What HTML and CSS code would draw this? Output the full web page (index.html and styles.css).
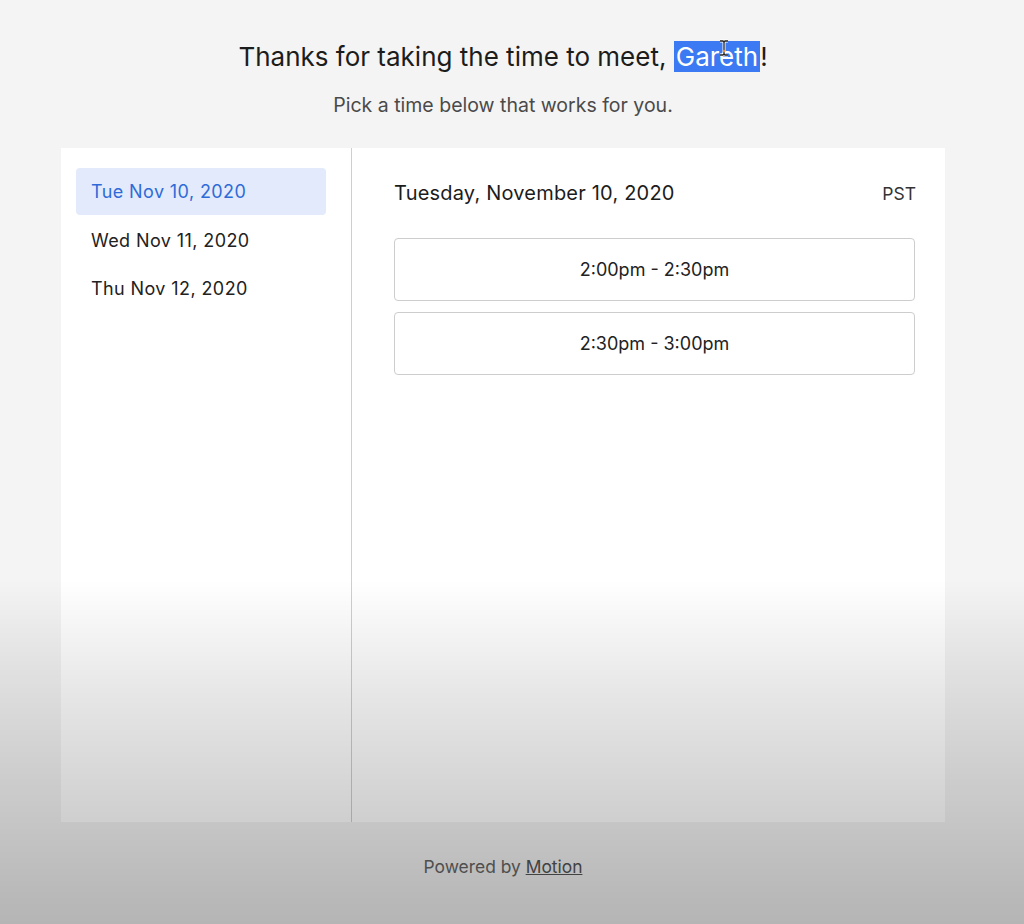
FILE: index.html
```html
<!DOCTYPE html>
<html lang="en">
<head>
  <meta charset="UTF-8">
  <title>Pick a time</title>
  <link rel="stylesheet" href="styles.css">
</head>
<body>
  <div class="page">
    <h1 class="title">Thanks for taking the time to meet, <span class="sel">Gareth<svg class="cursor" width="12" height="20" viewBox="0 0 12 20"><path d="M2 2h3l1 1.2 1-1.2h3M6 3v12M2 16h3l1-1.2 1 1.2h3" fill="none" stroke="#fff" stroke-width="3"/><path d="M2 2h3l1 1.2 1-1.2h3M6 3v12M2 16h3l1-1.2 1 1.2h3" fill="none" stroke="#222" stroke-width="1.3"/><circle cx="6" cy="12" r="1.3" fill="#e8903a"/></svg></span>!</h1>
    <p class="subtitle">Pick a time below that works for you.</p>

    <div class="card">
      <div class="days">
        <div class="day active">Tue Nov 10, 2020</div>
        <div class="day">Wed Nov 11, 2020</div>
        <div class="day">Thu Nov 12, 2020</div>
      </div>
      <div class="slots">
        <div class="slots-head">
          <span class="slots-date">Tuesday, November 10, 2020</span>
          <span class="tz">PST</span>
        </div>
        <button class="slot">2:00pm - 2:30pm</button>
        <button class="slot">2:30pm - 3:00pm</button>
      </div>
    </div>

    <p class="footer">Powered by <a href="#">Motion</a></p>
  </div>
  <div class="shade"></div>
</body>
</html>
```

FILE: styles.css
```css
body {
  margin: 0;
  background: #f4f4f4;
  font-family: Inter, "Noto Sans", sans-serif;
  color: #1c1c1c;
}

.page {
  width: 1006px;
  display: flex;
  flex-direction: column;
  align-items: center;
  padding-top: 39px;
}

.title {
  margin: 0;
  font-size: 26px;
  font-weight: 400;
  line-height: 36px;
}

.sel {
  position: relative;
  background: #3b7af2;
  color: #fff;
  padding: 0 2px;
}

.cursor {
  position: absolute;
  left: 44px;
  top: -2px;
}

.subtitle {
  margin: 17px 0 0;
  font-size: 19.5px;
  line-height: 26px;
  color: #4a4a4a;
}

.card {
  margin-top: 30px;
  width: 884px;
  height: 674px;
  background: #fff;
  display: flex;
}

.days {
  width: 291px;
  border-right: 1px solid #cfcfcf;
  padding: 20px 0 0 15px;
  box-sizing: border-box;
}

.day {
  width: 250px;
  height: 47px;
  line-height: 47px;
  margin-bottom: 1.5px;
  padding-left: 15px;
  box-sizing: border-box;
  font-size: 18px;
  letter-spacing: 0.4px;
  color: #222;
  border-radius: 4px;
}

.day.active {
  background: #e2eafb;
  color: #2f6bd8;
}

.slots {
  flex: 1;
  padding: 32px 29px 0 42px;
}

.slots-head {
  display: flex;
  justify-content: space-between;
  align-items: center;
  height: 26px;
  margin-bottom: 32px;
}

.slots-date {
  font-size: 20px;
  letter-spacing: 0.2px;
}

.tz {
  font-size: 17.5px;
  color: #333;
}

.slot {
  display: block;
  width: 521px;
  height: 63px;
  margin-bottom: 11px;
  background: #fff;
  border: 1px solid #cdcdcd;
  border-radius: 4px;
  font-family: Inter, "Noto Sans", sans-serif;
  font-size: 18px;
  color: #222;
}

.footer {
  margin: 34px 0 0;
  font-size: 17.4px;
  color: #666;
}

.footer a {
  color: #555;
}

.shade {
  position: fixed;
  inset: 0;
  pointer-events: none;
  background: linear-gradient(to bottom, rgba(0,0,0,0) 580px, rgba(0,0,0,0.1) 700px, rgba(0,0,0,0.19) 820px, rgba(0,0,0,0.26) 924px);
}
```
